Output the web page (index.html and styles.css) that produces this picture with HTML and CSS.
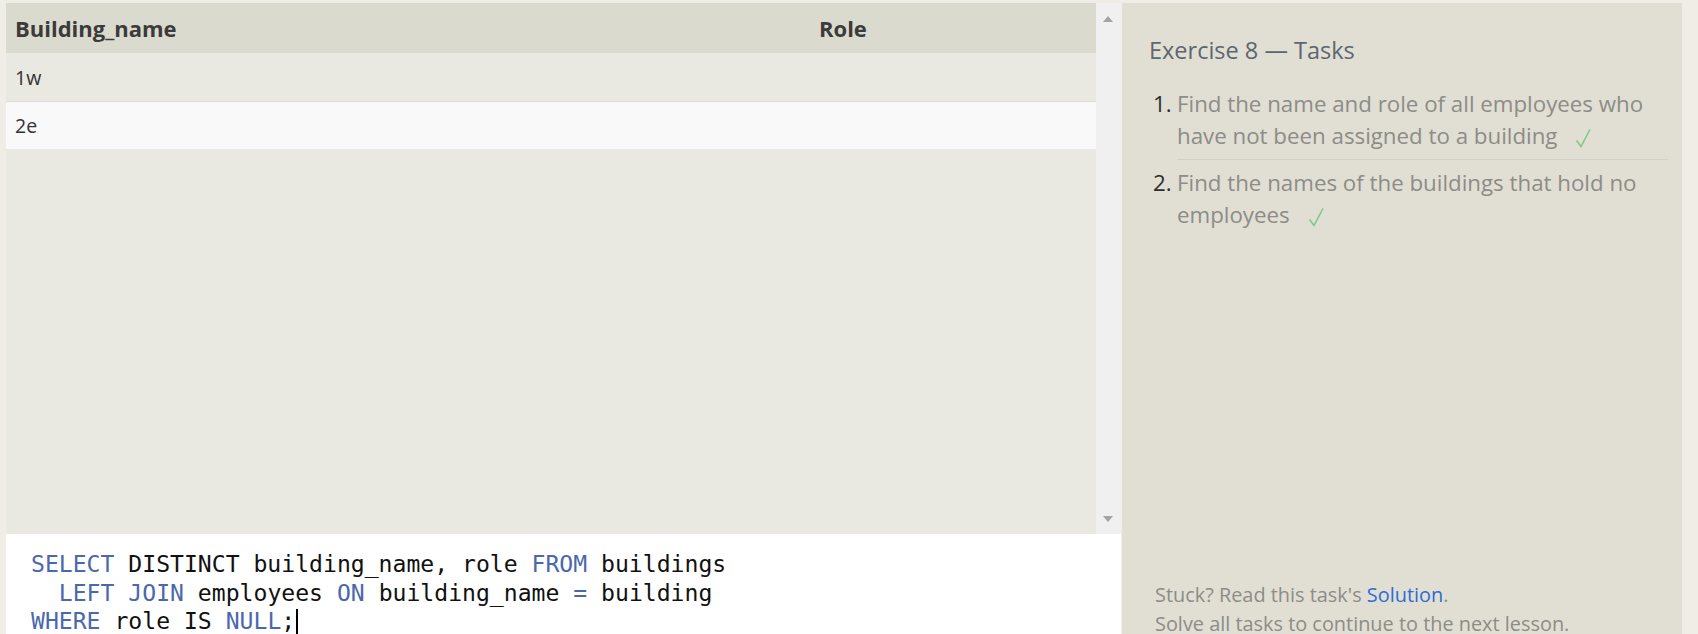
FILE: index.html
```html
<!DOCTYPE html>
<html>
<head>
<meta charset="utf-8">
<link rel="stylesheet" href="styles.css">
</head>
<body>
<div class="page">
  <div class="left">
    <div class="results">
      <div class="table-wrap">
        <div class="row head">
          <div class="cell c1">Building_name</div>
          <div class="cell c2">Role</div>
        </div>
        <div class="row odd">
          <div class="cell c1">1w</div>
          <div class="cell c2"></div>
        </div>
        <div class="row even">
          <div class="cell c1">2e</div>
          <div class="cell c2"></div>
        </div>
      </div>
      <div class="scrollbar">
        <div class="arrow up"></div>
        <div class="arrow down"></div>
      </div>
    </div>
    <div class="editor">
      <div class="line"><span class="kw">SELECT</span> DISTINCT building_name, role <span class="kw">FROM</span> buildings</div>
      <div class="line">  <span class="kw">LEFT</span> <span class="kw">JOIN</span> employees <span class="kw">ON</span> building_name <span class="kw">=</span> building</div>
      <div class="line"><span class="kw">WHERE</span> role IS <span class="kw">NULL</span>;<span class="caret"></span></div>
    </div>
  </div>
  <div class="panel">
    <div class="panel-top">
      <h2 class="title">Exercise 8 — Tasks</h2>
      <ol class="tasks">
        <li class="task"><span class="num">1.</span><span class="text">Find the name and role of all employees who have not been assigned to a building<svg class="check" viewBox="0 0 16 20" width="16" height="20"><path d="M1.5 12.5 L6 18.5 L15 1.5" fill="none" stroke="#80c88d" stroke-width="1.6" stroke-linejoin="miter"/></svg></span></li>
        <li class="task"><span class="num">2.</span><span class="text">Find the names of the buildings that hold no employees<svg class="check" viewBox="0 0 16 20" width="16" height="20"><path d="M1.5 12.5 L6 18.5 L15 1.5" fill="none" stroke="#80c88d" stroke-width="1.6" stroke-linejoin="miter"/></svg></span></li>
      </ol>
    </div>
    <div class="panel-bottom">
      <p class="note">Stuck? Read this task's <span class="link">Solution</span>.</p>
      <p class="note">Solve all tasks to continue to the next lesson.</p>
    </div>
  </div>
</div>
</body>
</html>
```

FILE: styles.css
```css
html, body {
  margin: 0;
  padding: 0;
  height: 100%;
  overflow: hidden;
}
body {
  background: #efede6;
  font-family: "Open Sans", "Noto Sans", sans-serif;
}
.page {
  display: flex;
  height: 634px;
  padding: 3px 16px 0 6px;
  box-sizing: border-box;
  gap: 1px;
}
.left {
  width: 1115px;
  display: flex;
  flex-direction: column;
}
.results {
  height: 531px;
  display: flex;
  flex: none;
}
.table-wrap {
  flex: 1;
  background: #eae9e1;
}
.row {
  display: flex;
  align-items: center;
}
.row.head {
  height: 50px;
  background: #dbdacf;
  font-weight: 700;
}
.row.odd {
  height: 48px;
  background: #eae9e1;
  border-bottom: 1px solid #dcdbd4;
}
.row.even {
  height: 47px;
  background: #f9f9f9;
}
.cell {
  font-size: 19.5px;
  color: #333;
}
.row.head .cell {
  font-size: 22px;
  color: #3b3b3b;
}
.c1 {
  width: 804px;
  padding-left: 9px;
}
.c2 {
  flex: 1;
}
.scrollbar {
  width: 25px;
  background: #f0f0f0;
  position: relative;
}
.arrow {
  position: absolute;
  left: 7px;
  width: 0;
  height: 0;
  border-left: 5px solid transparent;
  border-right: 5px solid transparent;
}
.arrow.up {
  top: 13px;
  border-bottom: 6px solid #a3a3a3;
}
.arrow.down {
  bottom: 12px;
  border-top: 6px solid #a3a3a3;
}
.editor {
  flex: 1;
  background: #ffffff;
  padding: 16px 0 0 25px;
  font-family: "DejaVu Sans Mono", "Liberation Mono", monospace;
  font-size: 23.1px;
  color: #111;
}
.line {
  white-space: pre;
  height: 28.5px;
  line-height: 28.5px;
}
.kw {
  color: #4b68ad;
}
.caret {
  display: inline-block;
  width: 2px;
  height: 27px;
  background: #000;
  vertical-align: middle;
  margin-left: 1px;
}
.panel {
  width: 560px;
  background: #e1dfd4;
  display: flex;
  flex-direction: column;
  justify-content: space-between;
  box-sizing: border-box;
  padding: 0 14px 0 27px;
}
.title {
  margin: 32px 0 0 0;
  font-weight: 400;
  font-size: 23.5px;
  color: #5d6670;
  line-height: 30px;
}
.tasks {
  list-style: none;
  margin: 23px 0 0 0;
  padding: 0;
}
.task {
  display: flex;
  font-size: 22.3px;
  line-height: 32px;
  color: #8d8c87;
}
.task + .task .text {
  border-top: 1px solid #d2d0c6;
  padding-top: 7px;
}
.task + .task .num {
  padding-top: 8px;
}
.task:first-child .text {
  padding-bottom: 7px;
}
.num {
  width: 24px;
  flex: none;
  color: #2e2e2e;
  margin-left: 4px;
}
.text {
  flex: 1;
}
.check {
  margin-left: 18px;
  vertical-align: -4px;
}
.panel-bottom {
  padding-left: 6px;
  margin-bottom: -4px;
}
.note {
  margin: 0;
  font-size: 19.9px;
  line-height: 29px;
  color: #8d8c87;
}
.link {
  color: #2e6bd6;
}
```
